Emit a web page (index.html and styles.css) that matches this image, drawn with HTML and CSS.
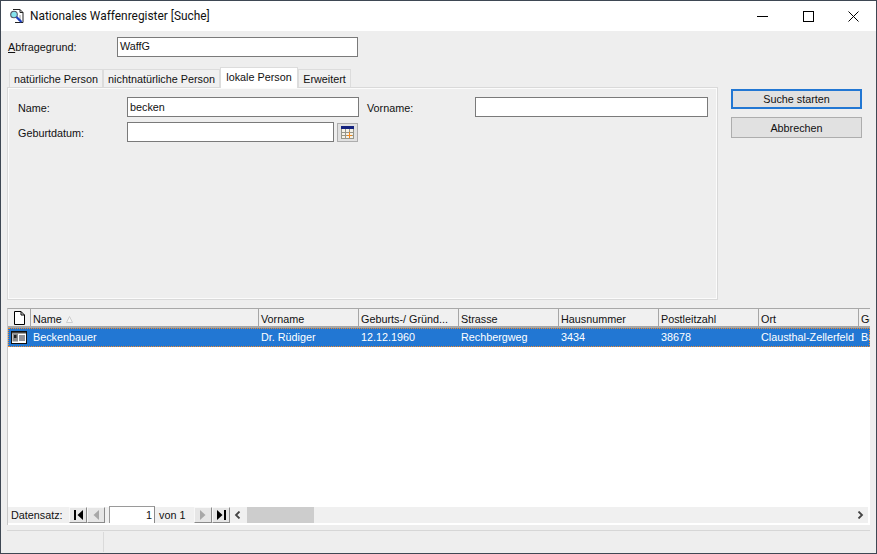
FILE: index.html
```html
<!DOCTYPE html>
<html lang="de">
<head>
<meta charset="utf-8">
<title>Nationales Waffenregister [Suche]</title>
<link rel="stylesheet" href="styles.css">
</head>
<body>
<div class="window">
  <header class="titlebar">
    <svg class="appicon" width="16" height="16" viewBox="0 0 16 16">
      <path d="M4 1.500h7l3 3v10H6" fill="#fff" stroke="#222" stroke-width="1"/>
      <path d="M11 1.500v3h3" fill="none" stroke="#222"/>
      <path d="M11 7v5M9 12h3" stroke="#999"/>
      <circle cx="5" cy="6.500" r="3.300" fill="#86e3ee" stroke="#556" stroke-width="1.100"/>
      <path d="M7.500 9l5 5" stroke="#1b3fc4" stroke-width="2.200"/>
    </svg>
    <span class="title">Nationales Waffenregister [Suche]</span>
    <div class="winctl">
      <svg width="11" height="11" viewBox="0 0 11 11"><path d="M0 5.500h11" stroke="#000"/></svg>
      <svg width="11" height="11" viewBox="0 0 11 11"><rect x=".5" y=".5" width="10" height="10" fill="none" stroke="#000"/></svg>
      <svg width="11" height="11" viewBox="0 0 11 11"><path d="M.5.5l10 10M10.500.5l-10 10" stroke="#000"/></svg>
    </div>
  </header>
  <main class="content">
    <div class="reason">
      <label class="reason-label"><u>A</u>bfragegrund:</label>
      <div class="field reason-field">WaffG</div>
    </div>
    <div class="search">
      <div class="tabset">
        <div class="tabs">
          <div class="tab t1">natürliche Person</div>
          <div class="tab t2">nichtnatürliche Person</div>
          <div class="tab t3 active">lokale Person</div>
          <div class="tab t4">Erweitert</div>
        </div>
        <div class="panel">
          <div class="formrow">
            <span class="lab1">Name:</span>
            <div class="field name-field">becken</div>
            <span class="lab2">Vorname:</span>
            <div class="field first-field"></div>
          </div>
          <div class="formrow">
            <span class="lab1">Geburtdatum:</span>
            <div class="field date-field"></div>
            <button class="calbtn" type="button" aria-label="Kalender">
              <svg width="13" height="13" viewBox="0 0 13 13">
                <rect x="0" y="0" width="13" height="3" fill="#14237e"/>
                <rect x="0" y="3" width="13" height="10" fill="#f4f1e6"/>
                <path d="M.5 3v10M4.500 3v10M8.500 3v10M12.500 3v10M0 6.500h13M0 9.500h13M0 12.500h13" stroke="#96968a" fill="none"/>
                <path d="M8.500 6v6M6 9.500h5" stroke="#ef8a1e" fill="none"/>
              </svg>
            </button>
          </div>
        </div>
      </div>
      <div class="actions">
        <button class="btn primary" type="button">Suche starten</button>
        <button class="btn" type="button">Abbrechen</button>
      </div>
    </div>
    <section class="grid">
      <div class="gridrow head">
        <div class="cell iconcell">
          <svg width="11" height="14" viewBox="0 0 11 14"><path d="M.5.5h6.500l3.500 3.500v9.500h-10zM7 .5v3.500h3.500" fill="#fff" stroke="#000"/></svg>
        </div>
        <div class="cell">Name <svg class="sort" width="7" height="7" viewBox="0 0 7 7"><path d="M3.500 .5L6.500 6.500H.5z" fill="#f7f7f7" stroke="#c4c4c4" stroke-width=".8"/></svg></div>
        <div class="cell">Vorname</div>
        <div class="cell">Geburts-/ Gründ...</div>
        <div class="cell">Strasse</div>
        <div class="cell">Hausnummer</div>
        <div class="cell">Postleitzahl</div>
        <div class="cell">Ort</div>
        <div class="cell">Geschlecht</div>
      </div>
      <div class="gridrow sel">
        <div class="cell iconcell">
          <svg width="16" height="13" viewBox="0 0 16 13">
            <rect x=".5" y=".5" width="15" height="12" fill="#fff" stroke="#111"/>
            <rect x="1" y="1" width="14" height="1.500" fill="#444"/>
            <rect x="1.500" y="2.500" width="5.500" height="8" fill="#8a8a8a"/>
            <rect x="3" y="4" width="2.500" height="3" fill="#222"/>
            <path d="M8 5h6M8 7h6M8 9h6" stroke="#223"/>
          </svg>
        </div>
        <div class="cell">Beckenbauer</div>
        <div class="cell">Dr. Rüdiger</div>
        <div class="cell">12.12.1960</div>
        <div class="cell">Rechbergweg</div>
        <div class="cell">3434</div>
        <div class="cell">38678</div>
        <div class="cell">Clausthal-Zellerfeld</div>
        <div class="cell">Bayern</div>
      </div>
      <div class="gridfill"></div>
      <div class="nav">
        <span class="navlabel">Datensatz:</span>
        <button class="navbtn" type="button" aria-label="Erster"><svg width="11" height="10" viewBox="0 0 11 10"><path d="M1 0h2v10H1zM10 0v10L4.500 5z" fill="#000"/></svg></button>
        <button class="navbtn" type="button" aria-label="Zurück"><svg width="6" height="10" viewBox="0 0 6 10"><path d="M6 0v10L.5 5z" fill="#a8a8a8"/></svg></button>
        <div class="navinput">1</div>
        <span class="navof">von 1</span>
        <button class="navbtn" type="button" aria-label="Weiter"><svg width="6" height="10" viewBox="0 0 6 10"><path d="M0 0v10L5.500 5z" fill="#a8a8a8"/></svg></button>
        <button class="navbtn" type="button" aria-label="Letzter"><svg width="11" height="10" viewBox="0 0 11 10"><path d="M8 0h2v10H8zM1 0v10L6.500 5z" fill="#000"/></svg></button>
        <div class="hscroll">
          <svg class="arrow" width="7" height="8" viewBox="0 0 7 8"><path d="M5.500 .5L2 4l3.500 3.500" fill="none" stroke="#444" stroke-width="1.800"/></svg>
          <div class="track"><div class="thumb"></div></div>
          <svg class="arrow" width="7" height="8" viewBox="0 0 7 8"><path d="M1.500 .5L5 4 1.500 7.500" fill="none" stroke="#444" stroke-width="1.800"/></svg>
        </div>
      </div>
    </section>
  </main>
  <footer class="status"><div class="statuspane"></div></footer>
</div>
</body>
</html>
```
FILE: styles.css
```css
* { box-sizing: border-box; }
html, body { margin: 0; padding: 0; }
body {
  width: 877px;
  height: 554px;
  overflow: hidden;
  font-family: "Liberation Sans", Arial, sans-serif;
  font-size: 10.8px;
  color: #111;
}
.window {
  width: 877px;
  height: 554px;
  display: flex;
  flex-direction: column;
  background: #eeeeee;
  border: 1px solid #3e4753;
}
.titlebar {
  height: 30px;
  flex: none;
  background: #fff;
  display: flex;
  align-items: center;
  padding: 0 0 0 8px;
}
.appicon { flex: none; }
.title { margin-left: 5px; font-family: Roboto, sans-serif; font-size: 11.9px; }
.winctl {
  margin-left: auto;
  width: 119px;
  padding-right: 17px;
  display: flex;
  justify-content: space-between;
}
.content {
  flex: none;
  height: 494px;
  padding: 6px 7px 0 6px;
}
.reason { display: flex; align-items: center; height: 20px; padding-left: 1px; }
.reason-label { width: 109px; }
.field {
  height: 20px;
  background: #fff;
  border: 1px solid #7a7a7a;
  padding: 0 2px;
  line-height: 17px;
}
.reason-field { width: 241px; }
.search { display: flex; margin-top: 10px; }
.tabset { width: 711px; flex: none; }
.tabs { display: flex; align-items: flex-end; height: 20px; padding-left: 2px; }
.tab {
  height: 18px;
  border: 1px solid #dcdcdc;
  border-bottom: 0;
  background: #f0f0f0;
  text-align: center;
  line-height: 19px;
}
.t1 { width: 94px; }
.t2 { width: 117px; }
.t3 { width: 78px; }
.t4 { width: 53px; }
.tab.active {
  height: 21px;
  margin-bottom: -1px;
  background: #fff;
  line-height: 18px;
  position: relative;
  z-index: 1;
}
.panel {
  height: 213px;
  border: 1px solid #d9d9d9;
  box-shadow: inset 1px 1px 0 #fbfbfb, inset -1px -1px 0 #fbfbfb;
  padding: 9px 0 0 10px;
}
.formrow { display: flex; align-items: center; height: 20px; margin-bottom: 5px; }
.lab1 { width: 109px; flex: none; padding-top: 1px; }
.lab2 { width: 108px; flex: none; margin-left: 8px; padding-top: 1px; }
.name-field { width: 232px; line-height: 19px; }
.first-field { width: 233px; }
.date-field { width: 207px; }
.calbtn {
  width: 21px;
  height: 19px;
  margin-left: 3px;
  padding: 0;
  display: flex;
  align-items: center;
  justify-content: center;
  background: #e1e1e1;
  border: 1px solid #adadad;
}
.actions {
  width: 131px;
  margin-left: 13px;
  padding-top: 22px;
  display: flex;
  flex-direction: column;
  gap: 8px;
}
.btn {
  height: 21px;
  padding: 0;
  font: inherit;
  color: #111;
  background: #e1e1e1;
  border: 1px solid #adadad;
}
.btn.primary { height: 20px; border: 2px solid #2277d3; }
.grid {
  margin-top: 8px;
  height: 217px;
  width: 863px;
  background: #fff;
  display: flex;
  flex-direction: column;
  overflow: hidden;
  border-top: 1px solid #a8a8a8;
  border-left: 1px solid #c8c8c8;
}
.gridrow {
  display: grid;
  grid-template-columns: 23px 228px repeat(7, 100px);
  flex: none;
}
.head {
  height: 19px;
  background: #f0f0f0;
  border-bottom: 2px solid #a6a6a6;
}
.head .cell {
  border-right: 1px solid #a6a6a6;
  padding: 1px 0 0 2px;
  white-space: nowrap;
  overflow: hidden;
  line-height: 19px;
  color: #111;
}
.head .iconcell { display: flex; align-items: center; justify-content: center; padding: 0; }
.sort { margin-left: 1px; }
.sel {
  height: 19px;
  background: #2277d3;
  outline: 1px dotted #f08a2c;
  outline-offset: -1px;
  color: #fff;
}
.sel .cell { padding-left: 2px; line-height: 18px; white-space: nowrap; overflow: hidden; }
.sel .iconcell { display: flex; align-items: center; padding-left: 3px; }
.gridfill { flex: 1; }
.nav {
  flex: none;
  height: 16px;
  margin-bottom: 2px;
  display: flex;
  align-items: center;
  background: #f0f0f0;
  width: 860px;
  padding-left: 3px;
}
.navlabel { width: 58px; flex: none; }
.navbtn {
  width: 18px;
  height: 16px;
  flex: none;
  padding: 0;
  display: flex;
  align-items: center;
  justify-content: center;
  background: #e6e6e6;
  border: 1px solid;
  border-color: #f8f8f8 #8a8a8a #8a8a8a #f8f8f8;
}
.navinput {
  width: 46px;
  height: 17px;
  margin: -1px 0 0 4px;
  flex: none;
  background: #fff;
  border-left: 1px solid #9a9a9a;
  border-top: 1px solid #9a9a9a;
  border-right: 1px solid #8a8a8a;
  text-align: right;
  padding-right: 2px;
  line-height: 16px;
}
.navof { width: 39px; flex: none; padding-left: 4px; }
.hscroll { flex: 1; display: flex; align-items: center; padding: 0 2px 0 4px; }
.arrow { flex: none; margin: 0 2px 0 0; }
.track { flex: 1; height: 16px; margin: 0 5px 0 4px; }
.thumb { width: 67px; height: 16px; background: #cdcdcd; }
.status {
  flex: 1;
  margin: 5px 6px 0 6px;
  border-top: 1px solid #d6d6d6;
  padding-top: 1px;
}
.statuspane { width: 97px; height: 20px; border-right: 1px solid #dadada; }
```
